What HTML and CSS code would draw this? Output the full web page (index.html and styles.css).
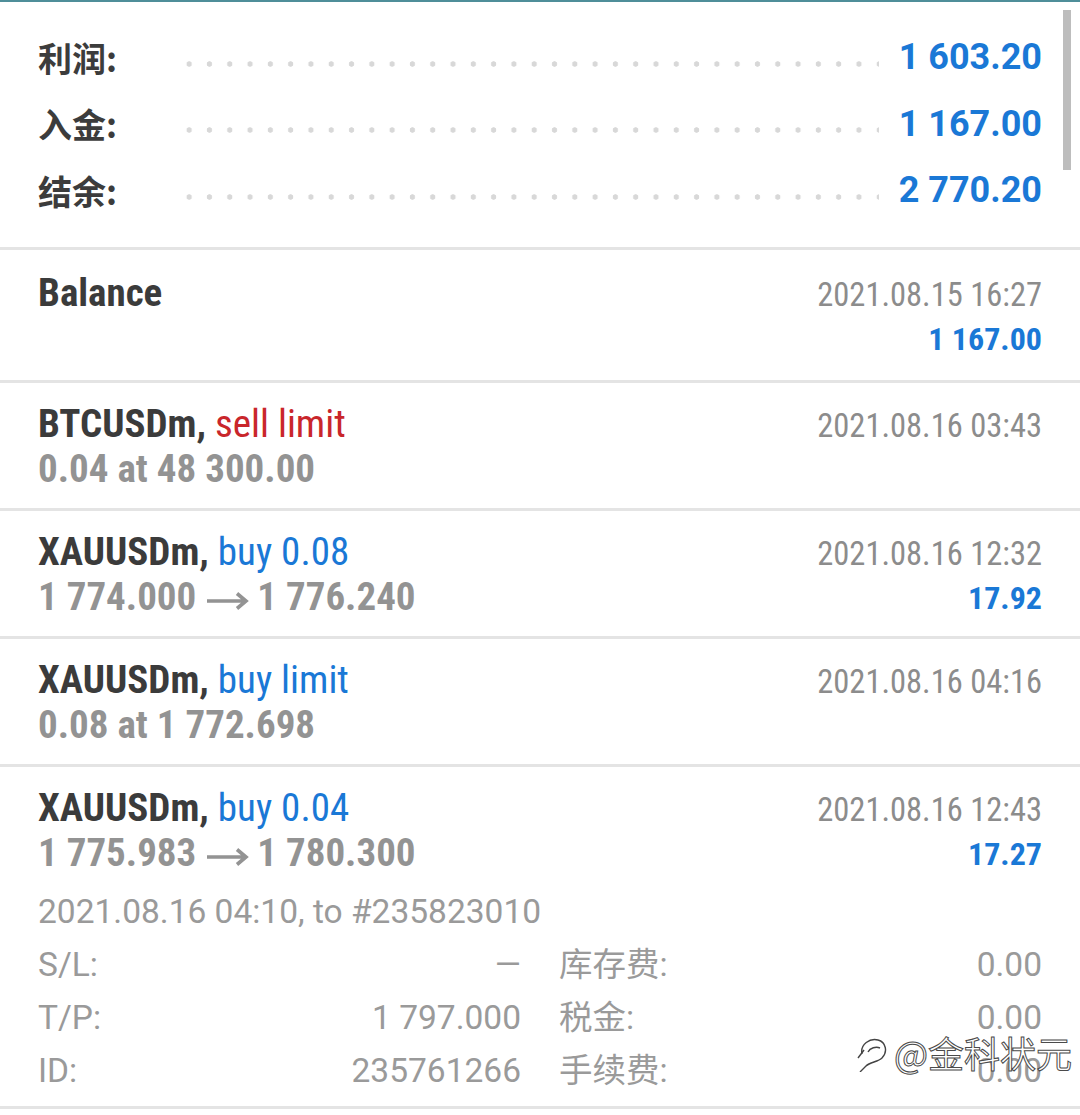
FILE: index.html
```html
<!DOCTYPE html>
<html lang="zh-CN">
<head>
    <meta charset="UTF-8">
    <title>历史</title>
    <link rel="stylesheet" href="styles.css">
</head>
<body>

<div class="topline"></div>

<section class="summary">
    <div class="sum-row">
        <span class="sum-label">利润:</span>
        <span class="dots"></span>
        <span class="sum-value">1 603.20</span>
    </div>
    <div class="sum-row">
        <span class="sum-label">入金:</span>
        <span class="dots"></span>
        <span class="sum-value">1 167.00</span>
    </div>
    <div class="sum-row">
        <span class="sum-label">结余:</span>
        <span class="dots"></span>
        <span class="sum-value">2 770.20</span>
    </div>
    <div class="scrollbar"></div>
</section>

<ul class="deals">
    <li class="deal deal-first">
        <div class="deal-main">
            <div class="deal-title">Balance</div>
        </div>
        <div class="deal-side">
            <div class="deal-date">2021.08.15 16:27</div>
            <div class="deal-profit">1 167.00</div>
        </div>
    </li>
    <li class="deal">
        <div class="deal-main">
            <div class="deal-title">BTCUSDm, <span class="sell">sell limit</span></div>
            <div class="deal-sub">0.04 at 48 300.00</div>
        </div>
        <div class="deal-side">
            <div class="deal-date">2021.08.16 03:43</div>
        </div>
    </li>
    <li class="deal">
        <div class="deal-main">
            <div class="deal-title">XAUUSDm, <span class="buy">buy 0.08</span></div>
            <div class="deal-sub">1 774.000<svg class="arrow" width="43" height="20" viewBox="0 0 43 20"><path d="M1 10 H40 M31 2.5 L40 10 L31 17.5" fill="none" stroke="#939393" stroke-width="3.6"/></svg>1 776.240</div>
        </div>
        <div class="deal-side">
            <div class="deal-date">2021.08.16 12:32</div>
            <div class="deal-profit">17.92</div>
        </div>
    </li>
    <li class="deal">
        <div class="deal-main">
            <div class="deal-title">XAUUSDm, <span class="buy">buy limit</span></div>
            <div class="deal-sub">0.08 at 1 772.698</div>
        </div>
        <div class="deal-side">
            <div class="deal-date">2021.08.16 04:16</div>
        </div>
    </li>
    <li class="deal deal-open">
        <div class="deal-head">
            <div class="deal-main">
                <div class="deal-title">XAUUSDm, <span class="buy">buy 0.04</span></div>
                <div class="deal-sub">1 775.983<svg class="arrow" width="43" height="20" viewBox="0 0 43 20"><path d="M1 10 H40 M31 2.5 L40 10 L31 17.5" fill="none" stroke="#939393" stroke-width="3.6"/></svg>1 780.300</div>
            </div>
            <div class="deal-side">
                <div class="deal-date">2021.08.16 12:43</div>
                <div class="deal-profit">17.27</div>
            </div>
        </div>
        <div class="deal-info">2021.08.16 04:10, to #235823010</div>
        <div class="deal-grid">
            <div class="kv"><span>S/L:</span><span>&mdash;</span></div>
            <div class="kv"><span>库存费:</span><span>0.00</span></div>
            <div class="kv"><span>T/P:</span><span>1 797.000</span></div>
            <div class="kv"><span>税金:</span><span>0.00</span></div>
            <div class="kv"><span>ID:</span><span>235761266</span></div>
            <div class="kv"><span>手续费:</span><span>0.00</span></div>
        </div>
        <div class="watermark">
            <svg width="34" height="40" viewBox="0 0 34 40">
                <path d="M6 22 C4 12 14 6 22 8 C30 10 32 20 26 26 C22 30 14 30 10 34 C8 36 6 38 4 40" fill="none" stroke="#444" stroke-width="1.4"/>
                <path d="M12 20 C14 16 20 14 24 16" fill="none" stroke="#444" stroke-width="1.4"/>
                <path d="M2 26 L8 18" fill="none" stroke="#444" stroke-width="1.4"/>
            </svg>
            <span>@金科状元</span>
        </div>
    </li>
</ul>

</body>
</html>
```

FILE: styles.css
```css
body {
    margin: 0;
    padding: 0;
    background: #ffffff;
    font-family: Roboto, "Noto Sans CJK SC", sans-serif;
    color: #333;
    width: 1080px;
    overflow: hidden;
}
.topline {
    height: 2px;
    background: #4f8e99;
}
.summary {
    position: relative;
    padding: 22px 38px 23px 38px;
}
.sum-row {
    display: flex;
    align-items: center;
    height: 66.5px;
}
.sum-label {
    width: 141px;
    font-family: "Noto Sans CJK SC", sans-serif;
    font-size: 34px;
    font-weight: 700;
    color: #3c3c3c;
}
.dots {
    width: 700px;
    height: 8px;
    margin-top: 13px;
    background-image: radial-gradient(circle, #d8d8d8 2.4px, transparent 3px);
    background-size: 20.3px 8px;
    background-repeat: repeat-x;
}
.sum-value {
    flex: 1;
    text-align: right;
    font-size: 36px;
    font-weight: bold;
    color: #1a78d6;
}
.scrollbar {
    position: absolute;
    top: 8px;
    right: 9px;
    width: 8px;
    height: 160px;
    background: #bdbdbd;
}
.deals {
    list-style: none;
    margin: 0;
    padding: 0;
    font-family: "Roboto Condensed", Roboto, sans-serif;
    font-stretch: condensed;
}
.deal {
    position: relative;
    display: flex;
    justify-content: space-between;
    border-top: 3px solid #e4e4e4;
    padding: 18px 38px 17px 38px;
}
.deal-first {
    padding-top: 20px;
    padding-bottom: 20px;
}
.deal-open {
    display: block;
    padding-bottom: 9px;
    border-bottom: 3px solid #e4e4e4;
}
.deal-head {
    display: flex;
    justify-content: space-between;
}
.deal-title, .deal-sub {
    height: 45px;
    line-height: 47px;
    font-size: 39px;
    font-weight: bold;
    color: #3b3b3b;
}
.deal-title .sell,
.deal-title .buy {
    font-weight: normal;
}
.sell {
    color: #c9262b;
}
.buy {
    color: #1a78d6;
}
.deal-sub {
    color: #939393;
}
.arrow {
    margin: 0 8px 0 10px;
    vertical-align: -1px;
}
.deal-side {
    text-align: right;
}
.deal-date {
    height: 45px;
    line-height: 51px;
    font-size: 32.5px;
    color: #8c8c8c;
}
.deal-profit {
    height: 45px;
    line-height: 48px;
    font-size: 32px;
    font-weight: bold;
    color: #1a78d6;
}
.deal-info {
    margin-top: 10px;
    height: 53px;
    line-height: 53px;
    font-family: Roboto, sans-serif;
    font-stretch: normal;
    font-size: 33.5px;
    color: #9a9a9a;
}
.deal-grid {
    display: grid;
    grid-template-columns: 1fr 1fr;
    column-gap: 38px;
}
.kv {
    display: flex;
    justify-content: space-between;
    height: 53px;
    line-height: 53px;
    font-family: Roboto, "Noto Sans CJK SC", sans-serif;
    font-stretch: normal;
    font-size: 33.5px;
    color: #9a9a9a;
}
.watermark {
    position: absolute;
    right: 8px;
    bottom: 28px;
    display: flex;
    align-items: center;
    gap: 4px;
    font-family: "Noto Sans CJK SC", sans-serif;
    font-size: 36px;
    color: #ffffff;
    -webkit-text-stroke: 1px #4a4a4a;
}
```
